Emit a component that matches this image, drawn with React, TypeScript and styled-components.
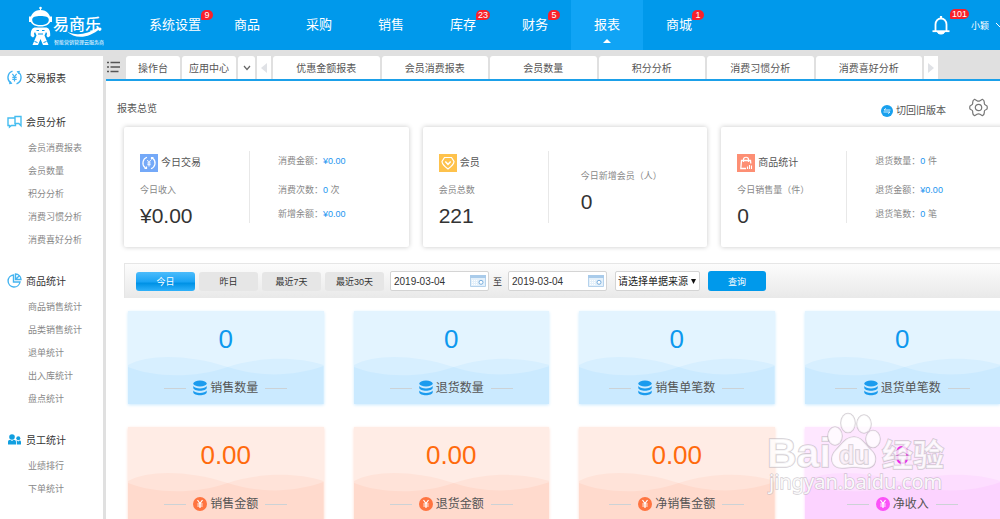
import React from 'react';
import styled, { createGlobalStyle } from 'styled-components';

const GlobalStyle = createGlobalStyle`
  * { box-sizing: border-box; }
  body {
    margin: 0;
    background: #fff;
    color: #555;
    font-family: "Liberation Sans", "Noto Sans CJK SC", sans-serif;
    font-size: 10px;
  }
  button, input, select { font-family: inherit; margin: 0; }
  button { border: 0; padding: 0; background: none; color: inherit; cursor: pointer; }
  a { color: inherit; text-decoration: none; }
  ul { list-style: none; margin: 0; padding: 0; }
  h1, h2, p, dl, dd, dt { margin: 0; font-weight: normal; }
  svg { display: block; flex: none; }
`;

const Shell = styled.div`
  position: relative;
  display: flex;
  flex-direction: column;
  height: 100vh;
  overflow: hidden;
`;

const Header = styled.header`
  display: flex;
  flex: none;
  align-items: center;
  height: 50px;
  background: #0099eb;
  color: #fff;
`;

const Brand = styled.a`
  display: flex;
  width: 139px;
  padding-left: 28px;
`;

const MainNav = styled.nav`
  display: flex;
  flex: 1;
`;

const NavItem = styled.a<{ $active?: boolean }>`
  position: relative;
  display: flex;
  align-items: center;
  justify-content: center;
  width: 72px;
  height: 50px;
  font-size: 13px;
  line-height: 18px;
  background: ${p => (p.$active ? '#10a4f5' : 'transparent')};
  &::after {
    content: "";
    display: ${p => (p.$active ? 'block' : 'none')};
    position: absolute;
    bottom: 7px;
    left: 32px;
    border: 4px solid transparent;
    border-top: 0;
    border-bottom-color: #fff;
  }
`;

const WithBadge = styled.span`
  position: relative;
`;

const Badge = styled.b`
  position: absolute;
  left: 100%;
  top: -6px;
  min-width: 12px;
  height: 10px;
  padding: 0 2px;
  border-radius: 5px 5px 5px 1px;
  background: #f8212b;
  font-size: 9px;
  font-weight: normal;
  line-height: 10px;
  text-align: center;
`;

const Account = styled.div`
  display: flex;
  align-items: center;
`;

const BellButton = styled.button`
  position: relative;
  width: 18px;
  margin-right: 21px;
`;

const UserButton = styled.button`
  display: flex;
  align-items: center;
  gap: 6px;
  width: 29px;
  overflow: hidden;
  font-size: 9px;
  white-space: nowrap;
`;

const Body = styled.div`
  display: flex;
  flex: 1;
  min-height: 0;
  padding-top: 6px;
  background: #e0e0e0;
`;

const Sidebar = styled.nav`
  display: flex;
  flex: none;
  flex-direction: column;
  gap: 15px;
  width: 103px;
  padding-top: 7px;
  background: #fff;
`;

const GroupTitle = styled.a`
  display: flex;
  align-items: center;
  gap: 4px;
  height: 29px;
  padding-left: 7px;
  font-size: 10px;
  color: #333;
`;

const SubLink = styled.a`
  display: flex;
  align-items: center;
  height: 23px;
  padding-left: 28px;
  font-size: 9px;
  color: #888;
`;

const Main = styled.main`
  display: flex;
  flex: 1;
  flex-direction: column;
  min-width: 0;
  margin-left: 3px;
  overflow: hidden;
  background: #fff;
`;

const TabBar = styled.div`
  display: flex;
  flex: none;
  gap: 2px;
  height: 25px;
  padding-right: 62px;
  background: #e0e0e0;
  border-bottom: 2px solid #1ba0e9;
`;

const MenuButton = styled.button`
  width: 18px;
  padding: 0 0 2px 1px;
`;

const Tab = styled.button<{ $width?: number; $square?: boolean }>`
  display: flex;
  flex: ${p => (p.$width ? 'none' : '1')};
  align-items: center;
  justify-content: center;
  width: ${p => (p.$width ? `${p.$width}px` : 'auto')};
  border-radius: ${p => (p.$square ? '0' : '3px 3px 0 0')};
  background: #fff;
  color: #555;
  font-size: 10px;
`;

const TitleRow = styled.div`
  display: flex;
  flex: none;
  align-items: center;
  height: 46px;
  padding: 6px 12px 0 11px;
`;

const PageTitle = styled.h1`
  flex: 1;
  font-size: 10px;
`;

const SwitchLink = styled.a`
  display: flex;
  align-items: center;
  gap: 3px;
  margin: 8px 23px 0 0;
  font-size: 10px;
  line-height: 12px;
`;

const Overview = styled.section`
  display: grid;
  flex: none;
  grid-template-columns: repeat(3, 1fr);
  gap: 14px;
  width: calc(100% - 12px);
  margin-left: 18px;
`;

const Card = styled.article`
  display: flex;
  align-items: center;
  height: 120px;
  padding-left: 16px;
  border-radius: 2px;
  background: #fff;
  box-shadow: 0 0 5px rgba(0, 0, 0, 0.22);
`;

const CardMain = styled.div`
  width: 110px;
  height: 72px;
  border-right: 1px solid #e8e8e8;
`;

const CardTitle = styled.h2`
  display: flex;
  align-items: center;
  gap: 3px;
  height: 24px;
  font-size: 10px;
  line-height: 12px;
`;

const Caption = styled.p`
  height: 30px;
  font-size: 9px;
  line-height: 30px;
  color: #888;
`;

const Total = styled.p`
  font-size: 21px;
  line-height: 22px;
  color: #333;
`;

const CardStats = styled.dl`
  display: grid;
  gap: 10px;
  padding-left: 28px;
  font-size: 9px;
  line-height: 14px;
  color: #888;
`;

const Stat = styled.div`
  display: flex;
  &:first-child { margin-bottom: 5px; }
`;

const Amount = styled.span`
  color: #1b95f0;
`;

const CardSide = styled.div`
  padding-left: 32px;
`;

const FilterBar = styled.form`
  display: flex;
  flex: none;
  align-items: center;
  gap: 4px;
  height: 35px;
  margin: 16px 0 13px 18px;
  padding-left: 11px;
  border: solid #e6e6e6;
  border-width: 1px 0 0 1px;
  background: linear-gradient(#fcfcfc, #e9e9e9);
  color: #333;
  font-size: 9px;
`;

const RangeButton = styled.button<{ $active?: boolean }>`
  width: 59px;
  height: 19px;
  border-radius: 3px;
  background: ${p =>
    p.$active ? 'linear-gradient(#4cbcfb, #1ba4f5 50%, #0092e6 60%, #2fb1fa)' : '#e6e6e6'};
  color: ${p => (p.$active ? '#fff' : '#333')};
  font-size: 9px;
`;

const DateField = styled.label`
  position: relative;
  display: flex;
  margin-left: 2px;
`;

const DateInput = styled.input`
  width: 99px;
  height: 20px;
  padding: 0 24px 0 3px;
  border: 1px solid #d4d4d4;
  border-radius: 2px;
  background: #fff;
  color: #333;
  font-size: 10px;
`;

const DateIcon = styled.svg`
  position: absolute;
  top: 4px;
  right: 3px;
`;

const SourceField = styled.label`
  position: relative;
  display: flex;
  margin: 0 4px;
`;

const SourceSelect = styled.select`
  appearance: none;
  width: 85px;
  height: 20px;
  padding: 0 0 0 2px;
  border: 1px solid #d4d4d4;
  border-radius: 2px;
  background: #fff;
  color: #222;
  font-size: 10px;
`;

const SelectArrow = styled.svg`
  position: absolute;
  top: 8px;
  right: 4px;
  pointer-events: none;
`;

const SearchButton = styled.button`
  width: 58px;
  height: 20px;
  border-radius: 3px;
  background: #0099eb;
  color: #fff;
  font-size: 9px;
`;

const Metrics = styled.section`
  display: grid;
  flex: none;
  grid-template-columns: repeat(4, 1fr);
  gap: 23px 30px;
  margin-left: 22px;
`;

const palettes = {
  blue: { top: '#e3f4ff', mid: '#d7efff', low: '#cbeaff', value: '#0d98ee', icon: '#1b9bee' },
  orange: { top: '#ffece5', mid: '#ffe3d9', low: '#ffdacd', value: '#ff6a0c', icon: '#ff7440' },
  pink: { top: '#fee7ff', mid: '#fdddff', low: '#fcd3ff', value: '#ee22ee', icon: '#fb52f8' },
};
type Tone = keyof typeof palettes;

const MetricCard = styled.article<{ $tone: Tone }>`
  position: relative;
  height: 93px;
  padding-top: 8px;
  background: ${p => palettes[p.$tone].top};
  box-shadow: 0 1px 3px ${p => palettes[p.$tone].low};
  text-align: center;
`;

const Waves = styled.svg`
  position: absolute;
  inset: 0;
  width: 100%;
  height: 100%;
`;

const MetricValue = styled.p<{ $tone: Tone }>`
  position: relative;
  color: ${p => palettes[p.$tone].value};
  font-size: 26px;
  line-height: 40px;
`;

const MetricLabel = styled.h2`
  position: relative;
  display: flex;
  align-items: center;
  justify-content: center;
  gap: 3px;
  margin-top: 19px;
  font-size: 12px;
  line-height: 20px;
  color: #555;
  &::before, &::after {
    content: "";
    width: 22px;
    height: 1px;
    margin: 0 4px;
    background: #ccd2d6;
  }
`;

const Watermark = styled.svg`
  position: absolute;
  right: 48px;
  bottom: 17px;
  pointer-events: none;
`;

function Logo() {
  return (
    <svg width="76" height="42" viewBox="0 0 76 42" fill="#fff">
      <circle cx="12.500" cy="4" r="1.300" />
      <path d="M12 4h1v4h-1z" />
      <path fillRule="evenodd" d="M12.500 6c6.500 0 10 4.500 10 10 0 4-4 6.500-10 6.500S2.500 20 2.500 16c0-5.500 3.500-10 10-10zm0 6c-5 0-8.300 1-8.300 3.700 0 3.300 3.300 5.300 8.300 5.300s8.300-2 8.300-5.300c0-2.700-3.300-3.700-8.300-3.700z" />
      <path d="M1 12.500h2v5.500H1zM22 12.500h2v5.500h-2z" />
      <path d="M6.500 23.500c-3 1-4 4-3.700 8.500l2.200 1.500 1.500-1.500-.5-2.500 1-1.500 1.500 3.500-4 9.500h5.500l2.500-6 2.500 6h5.500l-4-9.500 1.500-3.500 1 1.500-.5 2.500 1.500 1.500 2.200-1.500c.3-4.500-.7-7.500-3.700-8.500z" />
      <path d="M8.500 26.500h2.500M14 26.500h2.500M10 30h5M6.500 37.500l3 1M18.500 37.500l-3 1" stroke="#0099eb" />
      <text x="25" y="26" fontSize="16" fontWeight="500">易商乐</text>
      <path d="M39 27.500c9 5 20 3 31-4l2 1c-11 10-25 11-33 3z" />
      <circle cx="72" cy="25" r="1.500" />
      <text x="26" y="40" fontSize="5">智能营销管理云服务商</text>
    </svg>
  );
}

function BellIcon() {
  return (
    <svg width="18" height="20" viewBox="0 0 18 20" fill="none" stroke="#fff">
      <path d="M3.500 16V9.500C3.500 6 6 3.500 9 3.500s5.500 2.500 5.500 6V16" strokeWidth="1.800" />
      <path d="M.5 16.200h17" strokeWidth="1.800" />
      <path d="M9 1v2.500" strokeWidth="2.200" />
      <path d="M5.500 17.500c1 2 6 2 7 0z" fill="#fff" />
    </svg>
  );
}

function TradeIcon() {
  return (
    <svg width="15" height="15" viewBox="0 0 15 15" fill="none" stroke="#41b3f2" strokeWidth="1.400">
      <path d="M5.500 1.200A6.600 6.600 0 0 0 4 13M3 11.500l1.200 1.700-2 .3M9.500 13.800A6.600 6.600 0 0 0 11 2M12 3.500l-1.200-1.700 2-.3" />
      <path d="M5.400 3.800l2.100 3 2.100-3M7.500 6.800v4.600M5.300 7.300h4.400M5.300 9.300h4.400" strokeWidth="1.200" />
    </svg>
  );
}

function MemberIcon() {
  return (
    <svg width="15" height="15" viewBox="0 0 15 15" fill="none" stroke="#45bdf0" strokeWidth="1.400">
      <path d="M8 4H1v7.500h1.500V13l2-1.500H8.500V9" />
      <path d="M8 2.500h6v9.300l-2.200-2.300H8z" />
    </svg>
  );
}

function PieIcon() {
  return (
    <svg width="15" height="15" viewBox="0 0 15 15" fill="none" stroke="#45b4f0" strokeWidth="1.400">
      <path d="M6.500 2A6 6 0 1 0 13 9H6.500z" />
      <path d="M8.500 1v5.500H14C14 3.500 11.500 1 8.500 1zM8.500 6.500l3.500-3.500" />
    </svg>
  );
}

function StaffIcon() {
  return (
    <svg width="15" height="15" viewBox="0 0 15 15" fill="#119fe0">
      <circle cx="5" cy="5" r="2.800" />
      <path d="M1 12.500V10c0-1.500 1-2.300 2.300-2.300L5 9l1.700-1.300C8 7.700 9 8.500 9 10v2.500z" />
      <circle cx="11.300" cy="6.300" r="2" />
      <path d="M9.800 12.500V9.600c0-.6-.2-.9-.4-1.100h.7l1.200 1 1.200-1c1 0 1.500.7 1.500 1.500v2.500z" />
    </svg>
  );
}

function CardIcon({ kind }: { kind: string }) {
  const fill = kind === 'trade' ? '#74a9f8' : kind === 'member' ? '#fec24c' : '#fd8f74';
  return (
    <svg width="18" height="18" viewBox="0 0 18 18" fill="none" stroke="#fff">
      <path d="M0 0h18v18H0z" fill={fill} stroke="none" />
      {kind === 'trade' && (
        <>
          <path d="M7 3.300A6 6 0 0 0 5 13.500l1 .7M11 14.700A6 6 0 0 0 13 4.500l-1-.7M4.500 14.300H6.500V12.500M13.500 3.700h-2v1.800" strokeWidth="1.200" />
          <path d="M7.300 6L9 8.500 10.700 6M9 8.500v4M7.300 9h3.400M7.300 10.700h3.400" strokeWidth=".9" />
        </>
      )}
      {kind === 'member' && (
        <>
          <path d="M5.500 3.500h7l2.500 4c0 2.500-4 6-6 7.500-2-1.500-6-5-6-7.500z" strokeWidth="1.200" />
          <path d="M6.300 7.500L9 10.300l2.700-2.800" strokeWidth="1.500" />
        </>
      )}
      {kind === 'goods' && (
        <>
          <path d="M9 14.500H3.800L4.500 6.500h9l.3 3" strokeWidth="1.300" />
          <path d="M6.500 8V5.500c0-3 5-3 5 0V8" strokeWidth="1.200" />
          <path d="M10.500 15v-2.500M12.500 15v-4M14.500 15v-3.500" strokeWidth="1.100" />
        </>
      )}
    </svg>
  );
}

function GearIcon() {
  return (
    <svg width="19" height="19" viewBox="0 0 19 19" fill="none" stroke="#777" strokeWidth="1.200">
      <path strokeLinejoin="round" d="M5.600 1.300L8 2.700Q9.500 3.600 11 2.700L13.400 1.300Q15.500 2.300 15.300 4.800Q15 6.600 16.800 7.200L18 7.900Q18.500 9.500 18 11.100L16.800 11.800Q15 12.400 15.300 14.200Q15.500 16.700 13.400 17.700L11 16.300Q9.500 15.400 8 16.300L5.600 17.700Q3.500 16.700 3.700 14.200Q4 12.400 2.200 11.800L1 11.100Q.5 9.500 1 7.900L2.200 7.200Q4 6.600 3.700 4.800Q3.500 2.300 5.600 1.300z" />
      <circle cx="9.500" cy="9.500" r="3.200" />
    </svg>
  );
}

function MetricIcon({ tone }: { tone: Tone }) {
  const color = palettes[tone].icon;
  if (tone === 'blue') {
    return (
      <svg width="14" height="16" viewBox="0 0 14 16" fill={color}>
        <ellipse cx="7" cy="3.500" rx="6.700" ry="3" />
        <path d="M.3 6c1.500 3.200 11.900 3.200 13.400 0v1.700c0 4-13.400 4-13.400 0zM.3 10.500c1.500 3.200 11.900 3.200 13.400 0v1.700c0 4-13.400 4-13.400 0z" />
      </svg>
    );
  }
  return (
    <svg width="14" height="16" viewBox="0 0 14 16" fill="none" stroke="#fff" strokeWidth="1.200">
      <circle cx="7" cy="8" r="7" fill={color} stroke="none" />
      <path d="M4.500 4L7 7.500 9.500 4M7 7.500V12M4.300 8h5.400M4.300 10h5.400" />
    </svg>
  );
}

function CalendarIcon() {
  return (
    <DateIcon width="16" height="12" viewBox="0 0 16 12">
      <path d="M.5.500h15v11H.5z" fill="#e4f0fa" stroke="#b5d2ec" />
      <path d="M0 0h16v3H0z" fill="#a9cbea" />
      <path d="M2 5.500h6M2 7.500h6M2 9.500h6" stroke="#fff" strokeDasharray="1 1" />
      <circle cx="11" cy="7.300" r="2" fill="#fff" stroke="#79aede" />
    </DateIcon>
  );
}

const navItems = [
  { label: '系统设置', badge: '9' },
  { label: '商品' },
  { label: '采购' },
  { label: '销售' },
  { label: '库存', badge: '23' },
  { label: '财务', badge: '5' },
  { label: '报表', active: true },
  { label: '商城', badge: '1' },
];

const groups = [
  { title: '交易报表', icon: <TradeIcon />, links: [] as string[] },
  { title: '会员分析', icon: <MemberIcon />, links: ['会员消费报表', '会员数量', '积分分析', '消费习惯分析', '消费喜好分析'] },
  { title: '商品统计', icon: <PieIcon />, links: ['商品销售统计', '品类销售统计', '退单统计', '出入库统计', '盘点统计'] },
  { title: '员工统计', icon: <StaffIcon />, links: ['业绩排行', '下单统计'] },
];

const tabs = ['优惠金额报表', '会员消费报表', '会员数量', '积分分析', '消费习惯分析', '消费喜好分析'];

const metrics: { label: string; value: string; tone: Tone }[] = [
  { label: '销售数量', value: '0', tone: 'blue' },
  { label: '退货数量', value: '0', tone: 'blue' },
  { label: '销售单笔数', value: '0', tone: 'blue' },
  { label: '退货单笔数', value: '0', tone: 'blue' },
  { label: '销售金额', value: '0.00', tone: 'orange' },
  { label: '退货金额', value: '0.00', tone: 'orange' },
  { label: '净销售金额', value: '0.00', tone: 'orange' },
  { label: '净收入', value: '0', tone: 'pink' },
];

function Stats({ rows }: { rows: [string, string, string?][] }) {
  return (
    <CardStats>
      {rows.map(([label, amount, unit]) => (
        <Stat key={label}>
          <dt>{label}：</dt>
          <dd><Amount>{amount}</Amount>{unit ? ` ${unit}` : ''}</dd>
        </Stat>
      ))}
    </CardStats>
  );
}

function BaiduMark() {
  return (
    <Watermark width="188" height="94" viewBox="0 0 188 94" fill="#fff" fillOpacity=".75" stroke="#b5aeb5" strokeOpacity=".6" paintOrder="stroke">
      <g strokeWidth="1.600">
        <text x="3" y="59" fontSize="41" fontWeight="bold">Bai</text>
        <ellipse cx="71" cy="28" rx="7" ry="9" />
        <ellipse cx="84" cy="15" rx="7" ry="9.500" />
        <ellipse cx="100" cy="16" rx="7" ry="9" />
        <ellipse cx="109" cy="31" rx="7" ry="8.500" />
        <path d="M90 29c8 0 11 8 17 13 7 6 6 18-5 18-5 0-8-1-12-1s-7 1-12 1c-11 0-13-11-6-18s10-13 18-13z" />
        <text x="75" y="56" fontSize="25" fontWeight="bold" fill="#fbeff8">du</text>
        <text x="118" y="58" fontSize="31" fontWeight="bold" fontFamily="Noto Sans CJK SC">经验</text>
      </g>
      <text x="5" y="81" fontSize="20" fontFamily="Noto Sans" fillOpacity=".9" strokeWidth="1.400">jingyan.baidu.com</text>
    </Watermark>
  );
}

export default function App() {
  return (
    <Shell>
      <GlobalStyle />
      <Header>
        <Brand href="#" aria-label="易商乐"><Logo /></Brand>
        <MainNav>
          {navItems.map(item => (
            <NavItem key={item.label} href="#" $active={item.active}>
              <WithBadge>
                {item.label}
                {item.badge && <Badge>{item.badge}</Badge>}
              </WithBadge>
            </NavItem>
          ))}
        </MainNav>
        <Account>
          <BellButton type="button" aria-label="消息">
            <BellIcon />
            <Badge>101</Badge>
          </BellButton>
          <UserButton type="button">
            小颖
            <svg width="10" height="6" viewBox="0 0 10 6" fill="none" stroke="#fff"><path d="M1 1l4 4 4-4" /></svg>
          </UserButton>
        </Account>
      </Header>
      <Body>
        <Sidebar>
          {groups.map(group => (
            <div key={group.title}>
              <GroupTitle href="#">{group.icon}{group.title}</GroupTitle>
              <ul>
                {group.links.map(link => (
                  <li key={link}><SubLink href="#">{link}</SubLink></li>
                ))}
              </ul>
            </div>
          ))}
        </Sidebar>
        <Main>
          <TabBar>
            <MenuButton type="button" aria-label="菜单">
              <svg width="14" height="12" viewBox="0 0 14 12" stroke="#555" strokeWidth="1.500">
                <path d="M0 1.500h2M3.500 1.500H13M0 6h2M3.500 6H13M0 10.500h2M3.500 10.500H11.500" />
              </svg>
            </MenuButton>
            <Tab type="button" $width={54}>操作台</Tab>
            <Tab type="button" $width={54}>应用中心</Tab>
            <Tab type="button" $width={17} aria-label="更多">
              <svg width="8" height="6" viewBox="0 0 8 6" fill="none" stroke="#666" strokeWidth="1.200"><path d="M1 1l3 3.500L7 1" /></svg>
            </Tab>
            <Tab type="button" $width={14} $square aria-label="向左">
              <svg width="6" height="10" viewBox="0 0 6 10" fill="#e0e2e6"><path d="M6 0v10L0 5z" /></svg>
            </Tab>
            {tabs.map(tab => <Tab key={tab} type="button">{tab}</Tab>)}
            <Tab type="button" $width={14} $square aria-label="向右">
              <svg width="6" height="10" viewBox="0 0 6 10" fill="#e0e2e6"><path d="M0 0v10l6-5z" /></svg>
            </Tab>
          </TabBar>
          <TitleRow>
            <PageTitle>报表总览</PageTitle>
            <SwitchLink href="#">
              <svg width="12" height="12" viewBox="0 0 12 12" fill="none" stroke="#fff">
                <circle cx="6" cy="6" r="6" fill="#18a0ee" stroke="none" />
                <path d="M9.500 5H3l2-1.700M2.500 7H9L7 8.700" strokeWidth=".8" />
              </svg>
              切回旧版本
            </SwitchLink>
            <button type="button" aria-label="设置"><GearIcon /></button>
          </TitleRow>
          <Overview>
            <Card>
              <CardMain>
                <CardTitle><CardIcon kind="trade" />今日交易</CardTitle>
                <Caption>今日收入</Caption>
                <Total>¥0.00</Total>
              </CardMain>
              <Stats rows={[['消费金额', '¥0.00'], ['消费次数', '0', '次'], ['新增余额', '¥0.00']]} />
            </Card>
            <Card>
              <CardMain>
                <CardTitle><CardIcon kind="member" />会员</CardTitle>
                <Caption>会员总数</Caption>
                <Total>221</Total>
              </CardMain>
              <CardSide>
                <Caption>今日新增会员（人）</Caption>
                <Total>0</Total>
              </CardSide>
            </Card>
            <Card>
              <CardMain>
                <CardTitle><CardIcon kind="goods" />商品统计</CardTitle>
                <Caption>今日销售量（件）</Caption>
                <Total>0</Total>
              </CardMain>
              <Stats rows={[['退货数量', '0', '件'], ['退货金额', '¥0.00'], ['退货笔数', '0', '笔']]} />
            </Card>
          </Overview>
          <FilterBar>
            <RangeButton type="button" $active>今日</RangeButton>
            <RangeButton type="button">昨日</RangeButton>
            <RangeButton type="button">最近7天</RangeButton>
            <RangeButton type="button">最近30天</RangeButton>
            <DateField>
              <DateInput aria-label="开始日期" defaultValue="2019-03-04" />
              <CalendarIcon />
            </DateField>
            至
            <DateField>
              <DateInput aria-label="结束日期" defaultValue="2019-03-04" />
              <CalendarIcon />
            </DateField>
            <SourceField>
              <SourceSelect aria-label="单据来源"><option>请选择单据来源</option></SourceSelect>
              <SelectArrow width="5" height="5" viewBox="0 0 5 5"><path d="M0 0h5L2.500 5z" fill="#111" /></SelectArrow>
            </SourceField>
            <SearchButton type="button">查询</SearchButton>
          </FilterBar>
          <Metrics>
            {metrics.map(m => (
              <MetricCard key={m.label} $tone={m.tone}>
                <Waves viewBox="0 0 196 93" preserveAspectRatio="none">
                  <path fill={palettes[m.tone].mid} d="M0 54C20 43 60 43 100 56C135 45 170 46 196 54V93H0z" />
                  <path fill={palettes[m.tone].low} d="M0 56C25 66 65 68 100 56C130 66 165 66 196 55V93H0z" />
                </Waves>
                <MetricValue $tone={m.tone}>{m.value}</MetricValue>
                <MetricLabel><MetricIcon tone={m.tone} />{m.label}</MetricLabel>
              </MetricCard>
            ))}
          </Metrics>
        </Main>
      </Body>
      <BaiduMark />
    </Shell>
  );
}
